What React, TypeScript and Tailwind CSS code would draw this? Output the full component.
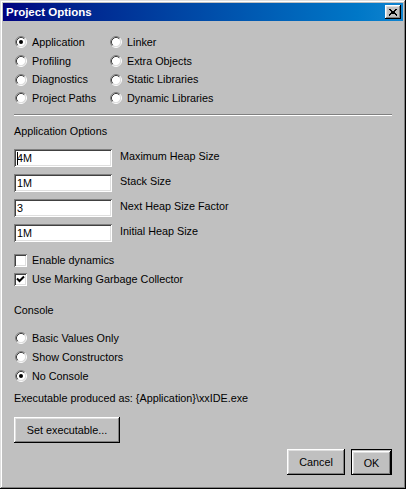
const raised =
  "shadow-[inset_-1px_-1px_#000000,inset_1px_1px_#ffffff,inset_-2px_-2px_#808080,inset_2px_2px_#dfdfdf]";
const sunken =
  "shadow-[inset_1px_1px_#808080,inset_-1px_-1px_#ffffff,inset_2px_2px_#404040,inset_-2px_-2px_#dfdfdf]";

function RadioDot({ checked }: { checked?: boolean }) {
  return (
    <svg width="12" height="12" viewBox="0 0 12 12" className="ml-[1px] shrink-0">
      <circle cx="6" cy="6" r="4.5" fill="#ffffff" />
      <path d="M2.11 9.89 A5.5 5.5 0 0 1 9.89 2.11" fill="none" stroke="#808080" strokeWidth="1" />
      <path d="M9.89 2.11 A5.5 5.5 0 0 1 2.11 9.89" fill="none" stroke="#ffffff" strokeWidth="1" />
      <path d="M2.82 9.18 A4.5 4.5 0 0 1 9.18 2.82" fill="none" stroke="#404040" strokeWidth="1" />
      <path d="M9.18 2.82 A4.5 4.5 0 0 1 2.82 9.18" fill="none" stroke="#dfdfdf" strokeWidth="1" />
      {checked && <circle cx="6" cy="6" r="2" fill="#000000" />}
    </svg>
  );
}

function Radio({ label, checked, h = "h-[18.7px]" }: { label: string; checked?: boolean; h?: string }) {
  return (
    <div className={"flex items-center " + h}>
      <RadioDot checked={checked} />
      <span className="ml-[5px] text-[10.8px] leading-[13px]">{label}</span>
    </div>
  );
}

function Check({ label, checked }: { label: string; checked?: boolean }) {
  return (
    <div className="flex h-[19px] items-center">
      <span className={"flex h-[13px] w-[13px] shrink-0 items-center justify-center bg-white " + sunken}>
        {checked && (
          <svg width="13" height="13" viewBox="0 0 13 13">
            <path d="M3 5.5 L5.5 8 L10 3.5" fill="none" stroke="#000000" strokeWidth="2" />
          </svg>
        )}
      </span>
      <span className="ml-[5px] text-[10.8px] leading-[13px]">{label}</span>
    </div>
  );
}

function Field({ value, label, caret }: { value: string; label: string; caret?: boolean }) {
  return (
    <div className="flex h-[18px] items-start">
      <div className={"relative flex h-[18px] w-[98px] shrink-0 items-center bg-white pl-[3px] pt-[2px] " + sunken}>
        {caret && <span className="absolute left-[3px] top-[3px] h-[13px] w-[1px] bg-black" />}
        <span className="text-[10.8px] leading-[13px]">{value}</span>
      </div>
      <span className="ml-[8px] pt-[1px] text-[10.8px] leading-[13px]">{label}</span>
    </div>
  );
}

export default function App() {
  return (
    <div className="h-[489px] w-[406px] overflow-hidden bg-[#c0c0c0] font-['Liberation_Sans',Arial,sans-serif] text-black shadow-[inset_-1px_-1px_#000000,inset_1px_1px_#dfdfdf,inset_-2px_-2px_#808080,inset_2px_2px_#ffffff]">
      {/* Title bar */}
      <div className="mx-[3px] flex h-[18px] translate-y-[3px] items-center justify-between bg-linear-to-r from-[#000080] to-[#1084d0] pl-[3px] pr-[2px]">
        <span className="text-[11.5px] font-bold leading-[13px] text-white">Project Options</span>
        <button className={"flex h-[14px] w-[16px] items-center justify-center bg-[#c0c0c0] " + raised}>
          <svg width="8" height="7" viewBox="0 0 8 7">
            <path d="M0 0 L8 7 M1 0 L9 7 M8 0 L0 7 M7 0 L-1 7" stroke="#000000" strokeWidth="1" shapeRendering="crispEdges" />
          </svg>
        </button>
      </div>

      <div className="mt-[3px] flex flex-col px-[14px]">
        {/* Page selector */}
        <div className="mt-[12px] grid grid-cols-[95px_1fr]">
          <Radio label="Application" checked />
          <Radio label="Linker" />
          <Radio label="Profiling" />
          <Radio label="Extra Objects" />
          <Radio label="Diagnostics" />
          <Radio label="Static Libraries" />
          <Radio label="Project Paths" />
          <Radio label="Dynamic Libraries" />
        </div>

        <div className="mt-[6px] h-[2px] border-t border-b border-t-[#808080] border-b-white" />

        <div className="mt-[9px] text-[10.8px] leading-[13px]">Application Options</div>

        <div className="mt-[11px] flex flex-col gap-[7px]">
          <Field value="4M" label="Maximum Heap Size" caret />
          <Field value="1M" label="Stack Size" />
          <Field value="3" label="Next Heap Size Factor" />
          <Field value="1M" label="Initial Heap Size" />
        </div>

        <div className="mt-[9px] flex flex-col">
          <Check label="Enable dynamics" />
          <Check label="Use Marking Garbage Collector" checked />
        </div>

        <div className="mt-[15px] text-[10.8px] leading-[13px]">Console</div>

        <div className="mt-[12px] flex flex-col">
          <Radio label="Basic Values Only" h="h-[19px]" />
          <Radio label="Show Constructors" h="h-[19px]" />
          <Radio label="No Console" h="h-[19px]" checked />
        </div>

        <div className="mt-[6px] text-[10.8px] leading-[13px]">Executable produced as: {"{Application}\\xxIDE.exe"}</div>

        <div className="mt-[12px]">
          <button className={"h-[26px] w-[106px] bg-[#c0c0c0] text-[10.8px] " + raised}>Set executable...</button>
        </div>

        <div className="mt-[6px] flex justify-end gap-[6px]">
          <button className={"h-[26px] w-[58px] bg-[#c0c0c0] text-[10.8px] " + raised}>Cancel</button>
          <div className="h-[26px] w-[41px] border border-black">
            <button className={"h-full w-full bg-[#c0c0c0] text-[10.8px] " + raised}>OK</button>
          </div>
        </div>
      </div>
    </div>
  );
}
